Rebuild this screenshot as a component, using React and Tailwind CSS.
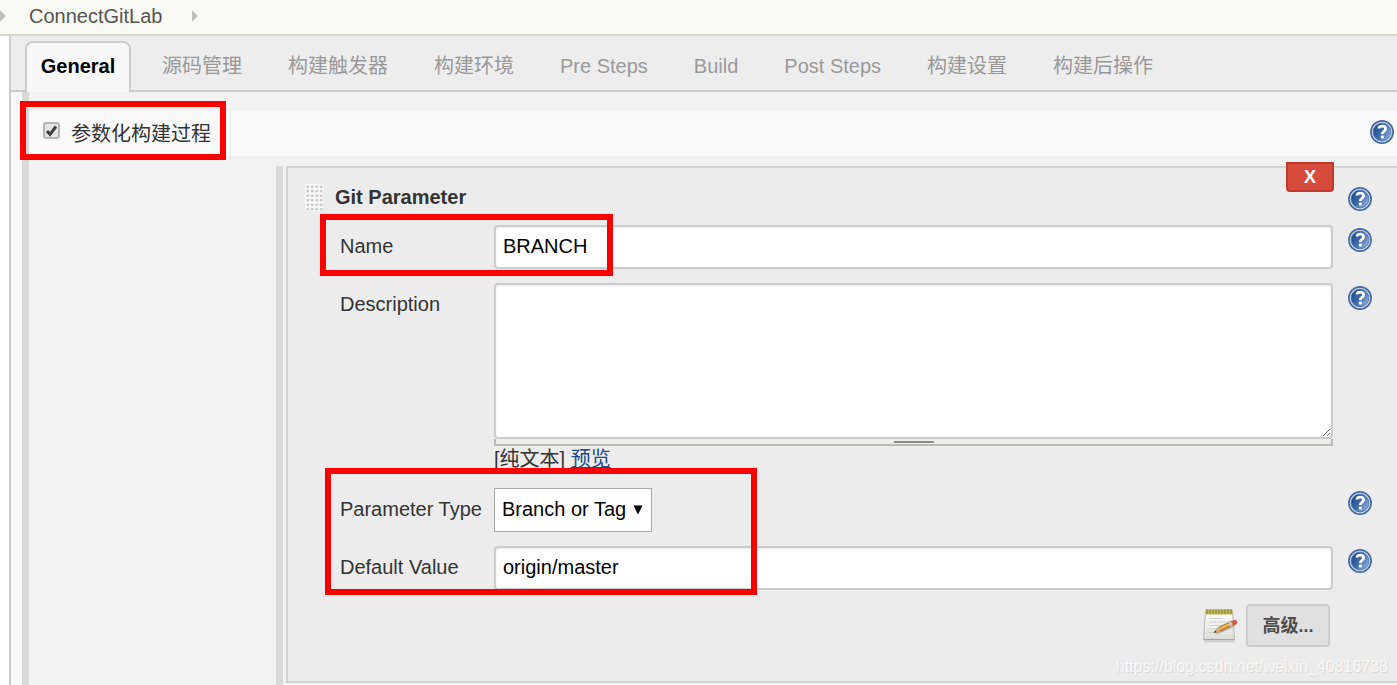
import React from "react";

function HelpIcon() {
  return (
    <svg viewBox="0 0 24 24" className="block size-6" aria-hidden="true">
      <defs>
        <linearGradient id="help-fill" x1="0" y1="0.2" x2="1" y2="0.8">
          <stop offset="0" stopColor="#1f4a8a" />
          <stop offset="0.45" stopColor="#3d68a6" />
          <stop offset="1" stopColor="#8fb0da" />
        </linearGradient>
      </defs>
      <circle cx="12" cy="12" r="11.1" fill="#d3deed" stroke="#456ca3" strokeWidth="1.7" />
      <circle cx="12" cy="12" r="8.900" fill="url(#help-fill)" stroke="#4a72aa" strokeWidth="0.8" />
      <path
        d="M8.700 8.500C9.200 6.700 10.500 6.100 12.100 6.100c2.100 0 3.500 1 3.500 2.800 0 2.500-3.300 2.300-3.300 5"
        fill="none"
        stroke="#fff"
        strokeWidth="2.700"
      />
      <rect x="10.900" y="15.600" width="2.900" height="2.800" rx="0.6" fill="#fff" />
    </svg>
  );
}

function HelpButton({ label }) {
  return (
    <button type="button" aria-label={label} className="mt-[3px] block size-6 shrink-0 self-start">
      <HelpIcon />
    </button>
  );
}

function Crumb() {
  return (
    <svg viewBox="0 0 6 12" className="h-3 w-[6px] shrink-0" aria-hidden="true">
      <path d="M0 0.5L6 6L0 11.5Z" fill="#bfbfbf" />
    </svg>
  );
}

function DragHandle() {
  return (
    <svg viewBox="0 0 18 27" className="h-[27px] w-[18px] shrink-0" aria-hidden="true">
      <defs>
        <pattern id="grip" width="4.5" height="4.5" patternUnits="userSpaceOnUse">
          <rect width="4.5" height="4.5" fill="#f8f8f8" />
          <rect x="1.5" y="1.5" width="2.4" height="2.4" rx="0.8" fill="#bcbcbc" />
        </pattern>
      </defs>
      <rect width="18" height="27" fill="url(#grip)" />
    </svg>
  );
}

function NotepadIcon() {
  return (
    <svg viewBox="0 0 36 36" className="size-9 shrink-0" aria-hidden="true">
      <defs>
        <linearGradient id="paper" x1="0" y1="0" x2="0" y2="1">
          <stop offset="0" stopColor="#ffffff" />
          <stop offset="1" stopColor="#dcdcda" />
        </linearGradient>
      </defs>
      <path d="M2 33h31" stroke="#cfcfcf" strokeWidth="2.5" />
      <path d="M3.500 4h27L32.500 31.500h-31z" fill="url(#paper)" stroke="#b8b8b6" />
      <path d="M2 31.500h30.500" stroke="#a4a4a2" strokeWidth="1" />
      <path d="M3.500 1.500h27v5h-27z" fill="#c2b65a" />
      <path
        d="M5 1v5M8 1v5M11 1v5M14 1v5M17 1v5M20 1v5M23 1v5M26 1v5M29 1v5"
        stroke="#968a35"
        strokeWidth="1.2"
      />
      <path d="M7 10.500h14M7 14h20M7 17.500h15M7 21h8M7 24.500h5" stroke="#d2d2d2" strokeWidth="1.2" />
      <path d="M14 26l19-8.500" stroke="#c4c4c2" strokeWidth="2" />
      <path d="M12 24.500l4.500-5.200 13.500-6.300 2.200 4-13.700 6.600z" fill="#cf9338" stroke="#a36f27" strokeWidth="0.8" />
      <path d="M17 20.800l13.300-6" stroke="#efc573" strokeWidth="1.3" />
      <path d="M12 24.500l4.500-5.200 2 4.300z" fill="#d9b27a" />
      <path d="M11.500 24.800l2.200-2.300 1 1.700z" fill="#4d3a22" />
      <path d="M28.300 13.700l2 4.200-1.800.8-1.900-4.100z" fill="#c6ccd0" />
      <path d="M29.800 13c2-1.300 4.600-1.200 5.300.5.600 1.700-.8 3.100-3.200 4z" fill="#e2524c" />
    </svg>
  );
}

const tabs = ["源码管理", "构建触发器", "构建环境", "Pre Steps", "Build", "Post Steps", "构建设置", "构建后操作"];

const inputClass =
  "block h-11 w-full rounded-[4px] border-2 border-[#ccc] bg-white px-[7px] pb-[2px] text-black shadow-[inset_0_1px_2px_rgba(0,0,0,0.08)] outline-none";

function Field({ id, label, children }) {
  return (
    <div className="flex">
      <label htmlFor={id} className="w-[154px] shrink-0 leading-[42px]">
        {label}
      </label>
      <div className="min-w-0 flex-1">{children}</div>
      <div className="ml-[15px]">
        <HelpButton label={`Help for ${label}`} />
      </div>
    </div>
  );
}

export default function App() {
  return (
    <div className="relative flex min-h-screen flex-col overflow-hidden bg-white font-['Liberation_Sans','Noto_Sans_CJK_SC',sans-serif] text-[20px] leading-6 text-[#333]">
      <nav className="flex h-9 items-center border-b-2 border-[#d3d7cf] bg-[#f8faf3] pb-[2px] text-[#555]">
        <Crumb />
        <a href="#project" className="mr-[30px] ml-[23px]">ConnectGitLab</a>
        <Crumb />
      </nav>

      <main className="ml-[9px] flex flex-1 flex-col border-l-2 border-[#ccc] bg-[#f8f8f8]">
        <div className="flex h-14 items-end border-b-2 border-[#ccc] bg-[#ededed] pl-[14px] whitespace-nowrap">
          <button
            type="button"
            className="-mb-[2px] h-[51px] w-[106px] shrink-0 rounded-t-[8px] border-2 border-b-0 border-[#ccc] bg-[#f8f8f8] pb-1 font-bold text-black"
          >
            General
          </button>
          <div className="ml-2 flex">
            {tabs.map((tab) => (
              <button type="button" key={tab} className="h-[49px] px-[23px] text-[#999]">
                {tab}
              </button>
            ))}
          </div>
        </div>

        <div className="ml-[11px] flex flex-1 flex-col border-l-[7px] border-[#dadada] bg-[#f2f2f2] pt-[19px]">
          <div className="flex h-[45px] items-center justify-between bg-[#f9f9f9] pr-[3px] pl-[14px]">
            <label className="flex items-center">
              <span className="relative mb-[6px] mr-[11px] block size-[17px]">
                <input
                  type="checkbox"
                  defaultChecked
                  className="peer block size-[17px] appearance-none rounded-[3px] border-2 border-[#b4b4b4] bg-[#e4e4e4]"
                />
                <svg viewBox="0 0 17 17" className="pointer-events-none absolute inset-0 hidden peer-checked:block" aria-hidden="true">
                  <path d="M4 9l3 3.300L13 4.500" fill="none" stroke="#404040" strokeWidth="3" />
                </svg>
              </span>
              <span>参数化构建过程</span>
            </label>
            <button type="button" aria-label="Help for 参数化构建过程" className="mb-1 block size-6">
              <HelpIcon />
            </button>
          </div>

          <div className="mt-[10px] ml-[247px] flex-1 border-l-[7px] border-[#dadada] pl-[3px]">
            <section className="relative border-2 border-r-0 border-[#d3d3d3] bg-[#ececec] pt-4 pr-[25px] pb-[34px] pl-[17px]">
              <button
                type="button"
                className="absolute -top-[6px] right-[63px] h-[30px] w-12 rounded-b-[4px] border-2 border-[#c0392b] bg-[#d64b3b] text-[18px] leading-none font-bold text-white"
              >
                X
              </button>
              <div className="flex h-[27px] items-center">
                <DragHandle />
                <h2 className="ml-3 flex-1 pb-[2px] font-bold">Git Parameter</h2>
                <HelpButton label="Help for Git Parameter" />
              </div>

              <div className="mt-[14px] flex flex-col gap-[14px] pl-[35px]">
                <Field id="name" label="Name">
                  <input id="name" type="text" defaultValue="BRANCH" className={inputClass} />
                </Field>

                <Field id="description" label="Description">
                  <textarea
                    id="description"
                    className="block h-[156px] w-full resize-y rounded-[4px] border-2 border-[#ccc] bg-white px-[7px] text-black shadow-[inset_0_1px_2px_rgba(0,0,0,0.08)] outline-none"
                  />
                  <div className="flex h-[7px] justify-center border-2 border-t-0 border-[#bbbbb5]">
                    <span className="mt-[2px] h-[2px] w-10 bg-[#8c8c88]" />
                  </div>
                  <div className="h-7 leading-[26px]">
                    [纯文本]{" "}
                    <a href="#preview" className="text-[#204a87] underline underline-offset-1">预览</a>
                  </div>
                </Field>

                <Field id="type" label="Parameter Type">
                  <div className="relative w-[158px]">
                    <select
                      id="type"
                      className="block h-11 w-full appearance-none border border-[#a9a9a9] bg-white pb-[2px] pl-[7px] text-black outline-none"
                    >
                      <option>Branch or Tag</option>
                    </select>
                    <svg viewBox="0 0 10 10" className="pointer-events-none absolute top-[17px] right-[9px] size-[10px]" aria-hidden="true">
                      <path d="M0.500 0.500h9L5 9.500z" fill="#000" />
                    </svg>
                  </div>
                </Field>

                <Field id="default-value" label="Default Value">
                  <input id="default-value" type="text" defaultValue="origin/master" className={inputClass} />
                </Field>
              </div>

              <div className="mt-[14px] mr-[42px] flex items-center justify-end gap-2">
                <NotepadIcon />
                <button
                  type="button"
                  className="h-[43px] w-[84px] rounded-[4px] border-2 border-[#ccc] bg-[#e0e0e0] text-[18px] font-bold text-[#4d4d4d]"
                >
                  高级...
                </button>
              </div>
            </section>
          </div>
        </div>
      </main>

      <div className="pointer-events-none absolute top-[101px] left-[20px] h-[59px] w-[206px] border-6 border-[#ff0000]" />
      <div className="pointer-events-none absolute top-[214px] left-[320px] h-[62px] w-[293px] border-6 border-[#ff0000]" />
      <div className="pointer-events-none absolute top-[468px] left-[325px] h-[127px] w-[432px] border-6 border-[#ff0000]" />
      <p className="pointer-events-none absolute right-[9px] bottom-[6px] text-[16px] text-[#f8f8f8] [text-shadow:1px_1px_1px_#d6d6d6]">
        https://blog.csdn.net/weixin_40816738
      </p>
    </div>
  );
}
